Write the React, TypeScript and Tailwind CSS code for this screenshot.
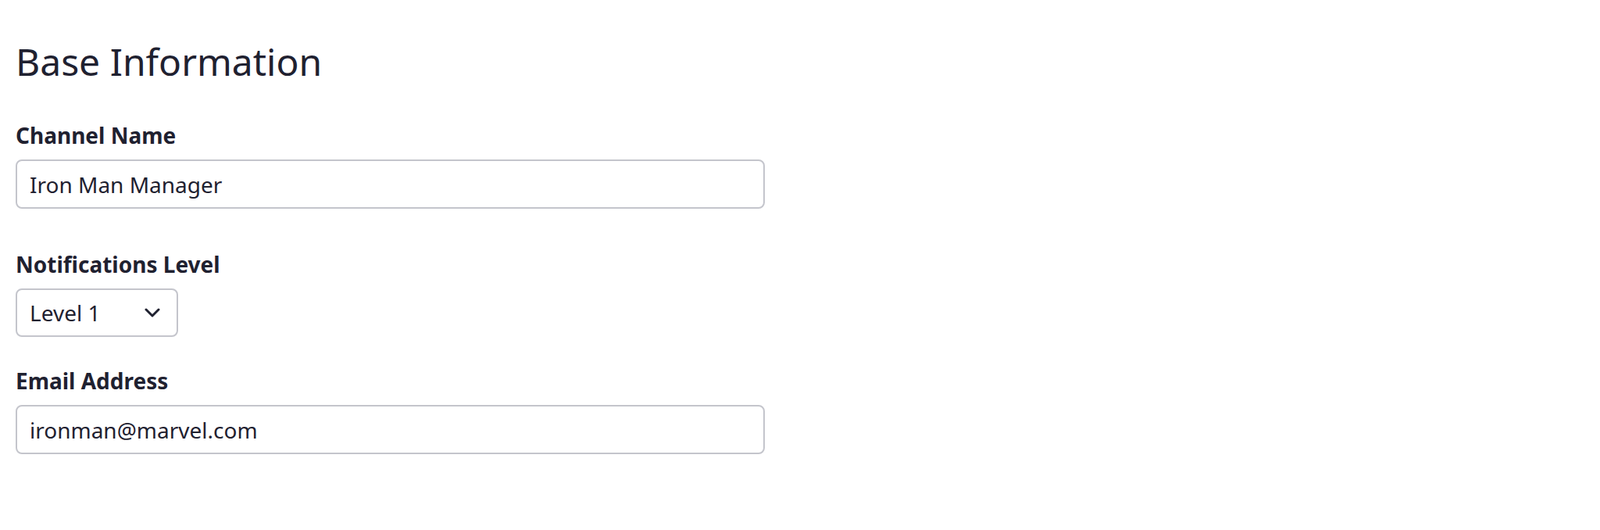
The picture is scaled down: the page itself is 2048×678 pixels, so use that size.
import { useState } from 'react'

const LEVELS = ['Level 1', 'Level 2', 'Level 3']

function Field({ label, children, className = '' }: { label: string; children: React.ReactNode; className?: string }) {
  return (
    <div className={className}>
      <label className="block text-[28px] leading-[42px] font-bold text-[#1f2130] mb-[10px]">{label}</label>
      {children}
    </div>
  )
}

function TextInput({ value }: { value: string }) {
  return (
    <input
      readOnly
      value={value}
      className="block w-[959px] h-[63px] rounded-[8px] border-2 border-[#c4c5cc] bg-white px-[16px] text-[28px] leading-[42px] text-[#1f2130] outline-none"
      style={{ fontFamily: '"Noto Sans", sans-serif' }}
    />
  )
}

export default function App() {
  const [level] = useState(LEVELS[0])

  return (
    <div className="min-h-[678px] bg-white pl-[20px] pt-[50px]" style={{ fontFamily: '"Noto Sans", sans-serif' }}>
      <h1 className="text-[48px] leading-[57px] font-normal text-[#1f2130] mb-[45px]">Base Information</h1>

      <Field label="Channel Name">
        <TextInput value="Iron Man Manager" />
      </Field>

      <Field label="Notifications Level" className="mt-[50px]">
        <div className="flex items-center justify-between w-[208px] h-[62px] rounded-[8px] border-2 border-[#c4c5cc] bg-white pl-[16px] pr-[21px]">
          <span className="text-[28px] leading-[42px] text-[#1f2130]">{level}</span>
          <svg width="20" height="12" viewBox="0 0 20 12" fill="none">
            <polyline points="2,2 10,10 18,2" stroke="#1f2130" strokeWidth="3" strokeLinecap="round" strokeLinejoin="round" />
          </svg>
        </div>
      </Field>

      <Field label="Email Address" className="mt-[35px]">
        <TextInput value="ironman@marvel.com" />
      </Field>
    </div>
  )
}
